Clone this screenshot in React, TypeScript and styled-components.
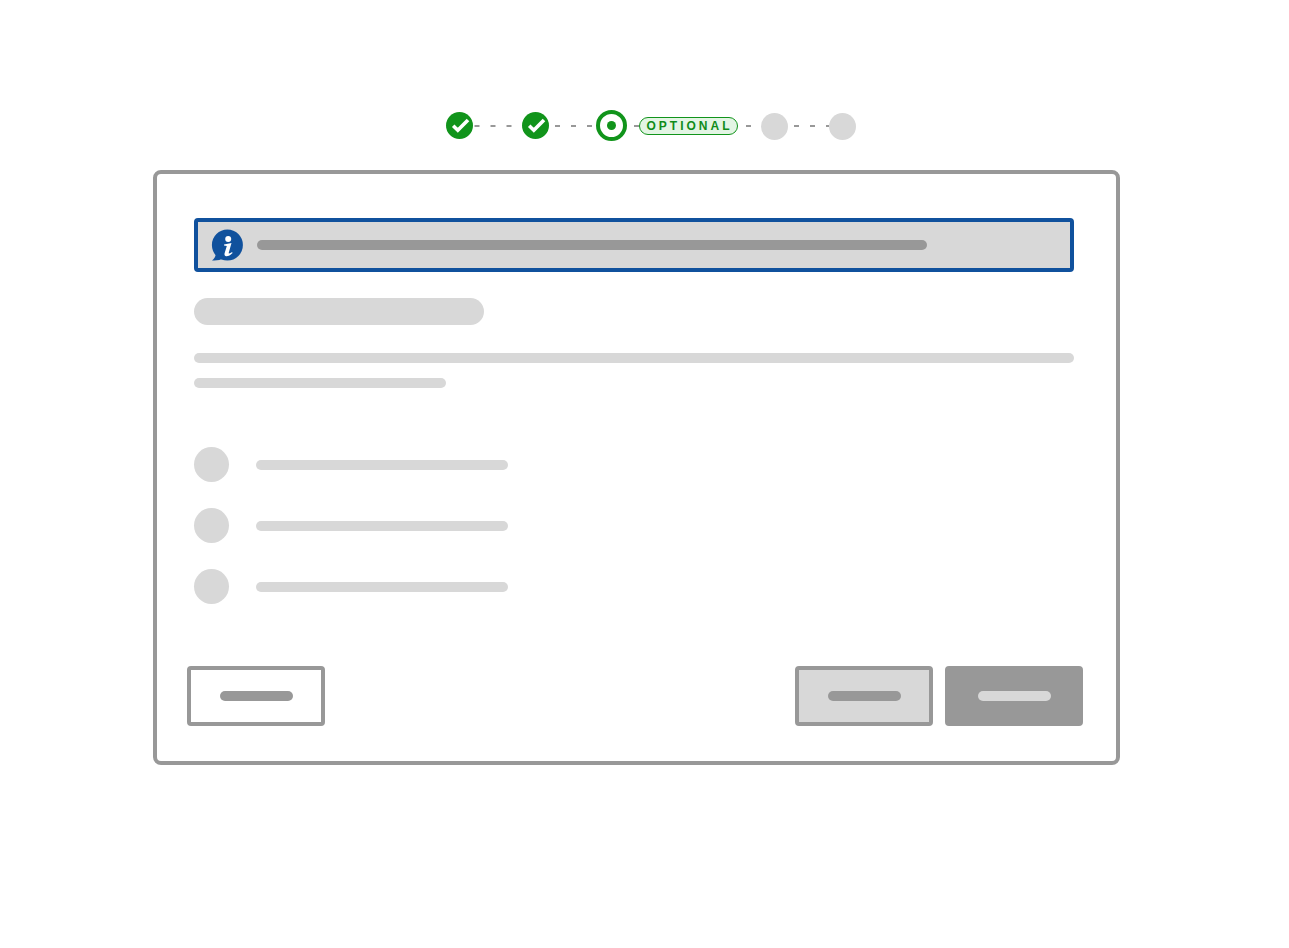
import styled, { createGlobalStyle } from 'styled-components'

const GlobalStyle = createGlobalStyle`
  html, body {
    margin: 0;
    padding: 0;
    background: #ffffff;
    font-family: "Liberation Sans", Arial, sans-serif;
  }
`

const grey = '#989898'
const light = '#d8d8d8'
const green = '#11941b'
const blue = '#10519d'

const Page = styled.div`
  width: 1289px;
  height: 948px;
  box-sizing: border-box;
  padding: 110px 0 0 153px;
`

const Stepper = styled.div`
  display: flex;
  align-items: center;
  height: 31px;
  margin-bottom: 29px;
  padding-left: 293px;
`

const Connector = styled.div<{ $width: number; $offset: number }>`
  width: ${(p) => p.$width}px;
  height: 2px;
  background-image: linear-gradient(90deg, ${grey} 0 5.5px, transparent 5.5px 16px);
  background-size: 16px 2px;
  background-position: ${(p) => p.$offset}px 0;
`

const DoneStep = styled.div`
  width: 27px;
  height: 27px;
  border-radius: 50%;
  background: ${green};
  display: flex;
  align-items: center;
  justify-content: center;
`

const CurrentStep = styled.div`
  width: 31px;
  height: 31px;
  box-sizing: border-box;
  border: 4px solid ${green};
  border-radius: 50%;
  display: flex;
  align-items: center;
  justify-content: center;

  &::after {
    content: '';
    width: 9px;
    height: 9px;
    border-radius: 50%;
    background: ${green};
  }
`

const TodoStep = styled.div`
  width: 27px;
  height: 27px;
  margin-top: 2px;
  border-radius: 50%;
  background: ${light};
`

const OptionalTag = styled.div`
  width: 99px;
  height: 18px;
  box-sizing: border-box;
  border: 1px solid ${green};
  border-radius: 9px;
  background: #e3f5e4;
  color: #0f8c19;
  font-size: 12px;
  font-weight: 700;
  letter-spacing: 3px;
  line-height: 16px;
  text-align: center;
  padding-left: 2px;
`

const Card = styled.div`
  width: 967px;
  height: 595px;
  box-sizing: border-box;
  border: 4px solid ${grey};
  border-radius: 8px;
  padding: 44px 33px 35px 30px;
  display: flex;
  flex-direction: column;
`

const Body = styled.div`
  width: 880px;
  margin-left: 7px;
  flex: 1;
`

const Banner = styled.div`
  height: 54px;
  box-sizing: border-box;
  border: 4px solid ${blue};
  border-radius: 4px;
  background: ${light};
  padding-left: 13px;
  display: flex;
  align-items: center;
  gap: 14px;
  margin-bottom: 26px;
`

const Bar = styled.div<{ $width: number; $height?: number; $tone?: string }>`
  width: ${(p) => p.$width}px;
  height: ${(p) => p.$height ?? 10}px;
  border-radius: ${(p) => (p.$height ?? 10) / 2}px;
  background: ${(p) => p.$tone ?? light};
`

const Heading = styled(Bar)`
  border-radius: 13.5px;
  margin-bottom: 28px;
`

const TextLine = styled(Bar)`
  margin-bottom: 15px;
`

const Options = styled.div`
  margin-top: 59px;
  display: flex;
  flex-direction: column;
  gap: 26px;
`

const Option = styled.div`
  display: flex;
  align-items: center;
  gap: 27px;
`

const Radio = styled.div`
  width: 35px;
  height: 35px;
  border-radius: 50%;
  background: ${light};
`

const Footer = styled.div`
  display: flex;
  justify-content: space-between;
`

const ButtonGroup = styled.div`
  display: flex;
  gap: 12px;
`

const Button = styled.div<{ $variant: 'outline' | 'muted' | 'solid' }>`
  width: 138px;
  height: 60px;
  box-sizing: border-box;
  border: 4px solid ${grey};
  border-radius: 4px;
  background: ${(p) => (p.$variant === 'outline' ? '#ffffff' : p.$variant === 'muted' ? light : grey)};
  display: flex;
  align-items: center;
  justify-content: center;
`

const Check = () => (
  <svg width="27" height="27" viewBox="0 0 27 27" fill="none">
    <path d="M7.2 13.8 L11.8 18.2 L22 7.9" stroke="#ffffff" strokeWidth="3.6" />
  </svg>
)

const InfoIcon = () => (
  <svg width="32" height="32" viewBox="0 0 32 32">
    <circle cx="16.4" cy="16" r="15.5" fill={blue} />
    <path d="M5 23 C5 27 3.5 29.8 1 31.4 C5 31.9 9.5 31 13 29 Z" fill={blue} />
    <circle cx="17.2" cy="10" r="3" fill="#ffffff" />
    <path
      d="M13 15.5 L20.5 14 L17.8 23.5 C17.5 24.8 18.5 24.8 21 23 L21.6 24 C19 26.6 17 27.4 15.2 27.2 C13.6 27 13.2 25.8 13.6 24.2 L15.8 17 L13 16.5 Z"
      fill="#ffffff"
    />
  </svg>
)

export default function App() {
  return (
    <Page>
      <GlobalStyle />
      <Stepper>
        <DoneStep><Check /></DoneStep>
        <Connector $width={49} $offset={1.5} />
        <DoneStep><Check /></DoneStep>
        <Connector $width={47} $offset={6} />
        <CurrentStep />
        <Connector $width={12} $offset={7} />
        <OptionalTag>OPTIONAL</OptionalTag>
        <Connector $width={23} $offset={8} />
        <TodoStep />
        <Connector $width={41} $offset={6} />
        <TodoStep />
      </Stepper>
      <Card>
        <Body>
          <Banner>
            <InfoIcon />
            <Bar $width={670} $tone={grey} />
          </Banner>
          <Heading $width={290} $height={27} />
          <TextLine $width={880} />
          <TextLine $width={252} />
          <Options>
            {[0, 1, 2].map((i) => (
              <Option key={i}>
                <Radio />
                <Bar $width={252} />
              </Option>
            ))}
          </Options>
        </Body>
        <Footer>
          <Button $variant="outline"><Bar $width={73} $tone={grey} /></Button>
          <ButtonGroup>
            <Button $variant="muted"><Bar $width={73} $tone={grey} /></Button>
            <Button $variant="solid"><Bar $width={73} /></Button>
          </ButtonGroup>
        </Footer>
      </Card>
    </Page>
  )
}
